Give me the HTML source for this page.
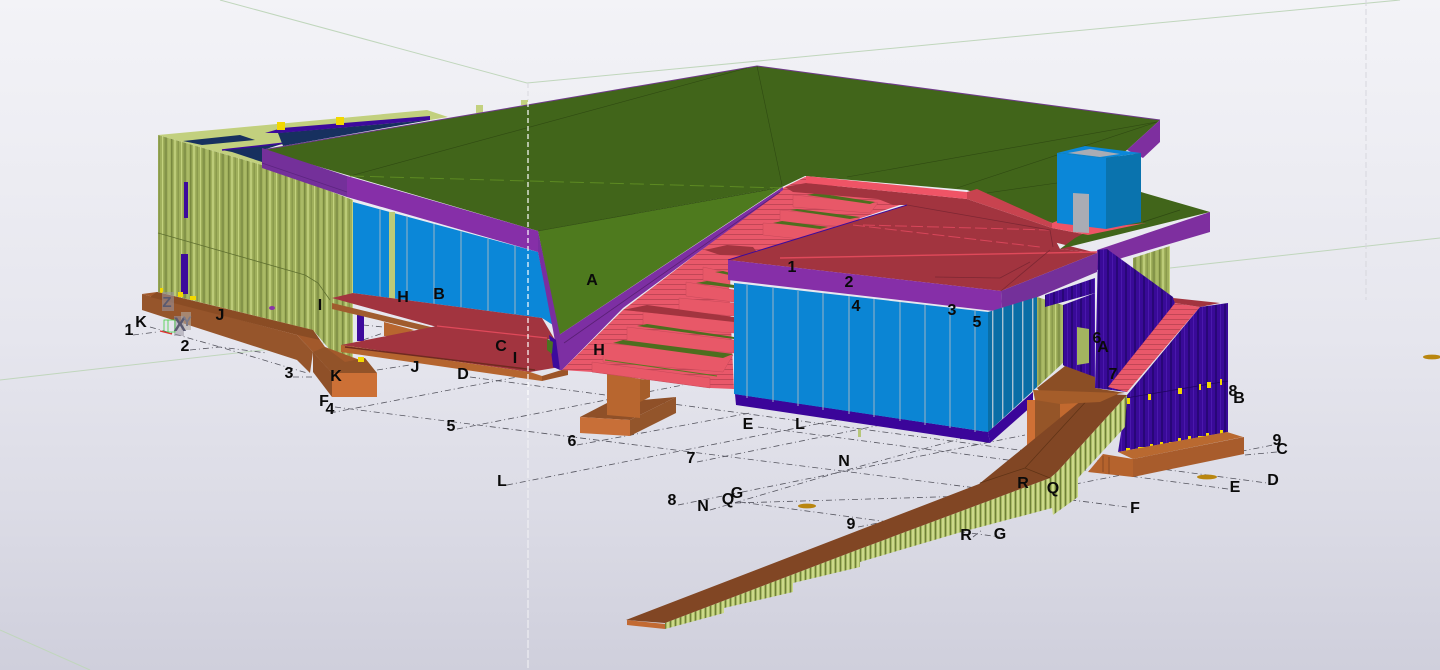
<!DOCTYPE html>
<html>
<head>
<meta charset="utf-8">
<title>3D model view</title>
<style>
html,body{margin:0;padding:0;width:1440px;height:670px;overflow:hidden;background:#dedee8}
svg{display:block}
text{font-family:"Liberation Sans",sans-serif;font-weight:700;font-size:16px;fill:#0a0a0a;text-anchor:middle}
</style>
</head>
<body>
<svg width="1440" height="670" viewBox="0 0 1440 670" xmlns="http://www.w3.org/2000/svg">
<defs>
<linearGradient id="bg" x1="0" y1="0" x2="0" y2="1">
<stop offset="0" stop-color="#f3f3f7"/><stop offset=".5" stop-color="#e6e6ee"/><stop offset=".75" stop-color="#dcdce6"/><stop offset="1" stop-color="#cfcfdc"/>
</linearGradient>
<pattern id="ol" patternUnits="userSpaceOnUse" width="19" height="10">
<rect width="19" height="10" fill="#a0b05c"/><rect width="1.5" height="10" fill="#79893f"/><rect x="3" width="2" height="10" fill="#bccb78"/><rect x="6.5" width="1.5" height="10" fill="#8a9a4c"/><rect x="10" width="1" height="10" fill="#c3d27e"/><rect x="12.5" width="2.5" height="10" fill="#849449"/><rect x="16.5" width="1" height="10" fill="#b4c470"/>
</pattern>
<pattern id="ol2" patternUnits="userSpaceOnUse" width="5" height="10">
<rect width="5" height="10" fill="#a6b863"/><rect width="1" height="10" fill="#6f8038"/><rect x="2" width="2" height="10" fill="#ccd98a"/>
</pattern>
<pattern id="in" patternUnits="userSpaceOnUse" width="9" height="10">
<rect width="9" height="10" fill="#390a98"/><rect width="2" height="10" fill="#280777"/><rect x="5" width="1" height="10" fill="#4a18ad"/>
</pattern>
<pattern id="bl" patternUnits="userSpaceOnUse" width="10" height="10">
<rect width="10" height="10" fill="#0a6ea6"/><rect x="2" width="1.4" height="10" fill="#a9c2d2"/>
</pattern>
<pattern id="st" patternUnits="userSpaceOnUse" width="10" height="5">
<rect width="10" height="5" fill="#e9586a"/><rect y="4" width="10" height="1" fill="#c24656"/>
</pattern>
</defs>

<rect width="1440" height="670" fill="url(#bg)"/>

<!-- guide lines -->
<g fill="none" stroke="#c0d6bc" stroke-width="1">
<path d="M220 0L527 83"/><path d="M527 83L1400 0"/><path d="M0 380L350 340"/><path d="M1170 268L1440 238"/><path d="M0 630L90 670"/>
</g>
<path d="M1366 0V300" stroke="#d6d6dd" stroke-width="1" fill="none" stroke-dasharray="6 3"/>
<path d="M528 83V100" stroke="#d8d8de" stroke-width="1" stroke-dasharray="5 3"/>

<!-- grid -->
<g fill="none" stroke="#55555f" stroke-width=".8" stroke-dasharray="6 3 1 3">
<path d="M133 335L157 332"/><path d="M150 327L220 347L307 373"/><path d="M190 350L220 347L267 353"/><path d="M293 377L312 377"/>
<path d="M377 370L410 365"/><path d="M363 325L383 327M363 340L383 333"/>
<path d="M470 377L1267 483"/><path d="M758 427L1228 489"/><path d="M335 407L1127 507"/><path d="M740 502L1000 537"/>
<path d="M330 413L517 377"/><path d="M457 429L683 385"/><path d="M577 445L750 413"/><path d="M507 485L873 413"/>
<path d="M697 462L1025 396"/><path d="M678 505L1025 435"/><path d="M710 510L843 471L1000 428"/>
<path d="M858 527L1273 445"/><path d="M735 503L970 496"/><path d="M973 537L982 530"/><path d="M1245 455L1277 452"/>
</g>
<ellipse cx="807" cy="506" rx="9" ry="2.4" fill="#b9860f"/>
<ellipse cx="1207" cy="477" rx="10" ry="2.4" fill="#b9860f"/>
<ellipse cx="1432" cy="357" rx="9" ry="2.4" fill="#b9860f"/>
<rect x="858" y="429" width="3" height="8" fill="#b6c67a"/>

<!-- west wing roof -->
<polygon points="158,135 277,124 427,110 448,117 262,148 262,165" fill="#c2d07e"/>
<polygon points="183,141 240,135 255,140 202,145" fill="#17305f"/>
<polygon points="222,150 285,143 263,150 262,162 232,152" fill="#17305f"/>
<path d="M222 150L285 143" stroke="#3d0a9c" stroke-width="1.5"/>
<polygon points="278,133 430,120 300,143 283,146" fill="#17305f"/>
<polygon points="265,133 282,128 430,116 430,120 280,133" fill="#3d0a9c"/>
<rect x="277" y="122" width="8" height="8" fill="#f2d800"/>
<rect x="336" y="117" width="8" height="8" fill="#f2d800"/>
<rect x="476" y="105" width="7" height="8" fill="#c3d17f"/>
<rect x="521" y="100" width="7" height="5" fill="#c3d17f"/>

<!-- west olive wall -->
<polygon points="158,135 262,165 353,200 353,357 340,357 330,350 313,330 158,292" fill="url(#ol)"/>
<path d="M158 233L305 275L318 283L330 300" fill="none" stroke="#5f7030" stroke-width=".8"/>
<rect x="184" y="182" width="4" height="36" fill="#3d0a9c"/>
<rect x="181" y="254" width="7" height="40" fill="#3d0a9c"/>
<ellipse cx="272" cy="308" rx="3" ry="2" fill="#8a35a8"/>
<rect x="160" y="288" width="3" height="6" fill="#f2d800"/><rect x="178" y="292" width="5" height="5" fill="#f2d800"/><rect x="190" y="296" width="6" height="4" fill="#f2d800"/>

<!-- orange beam J + K block -->
<polygon points="142,294 157,292 313,330 325,347 360,360 332,373 313,352 297,335" fill="#a2592b"/>
<polygon points="142,294 142,310 297,360 310,373 313,352 297,335" fill="#96552b"/>
<polygon points="150,297 157,292 313,330 320,340 298,335" fill="#8a4c24"/>
<polygon points="313,352 332,373 332,397 313,372" fill="#8f5028"/>
<polygon points="313,352 325,347 345,362 365,358 377,373 332,373" fill="#925329"/>
<polygon points="332,373 377,373 377,397 332,397" fill="#cc7036"/>
<rect x="358" y="357" width="6" height="5" fill="#f2d800"/>

<!-- column under deck -->
<rect x="357" y="315" width="7" height="26" fill="#3d0a9c"/>
<polygon points="384,322 414,330 398,336 384,336" fill="#b8662f"/>

<!-- middle column footing -->
<polygon points="580,417 607,403 676,397 630,420" fill="#8f5028"/>
<polygon points="580,417 630,420 630,436 580,433" fill="#c86f38"/>
<polygon points="630,420 676,397 676,413 630,436" fill="#93552b"/>
<polygon points="607,373 640,379 640,418 607,415" fill="#b8662f"/>
<polygon points="640,379 650,380 650,397 640,402" fill="#a55d2a"/>

<!-- west glass -->
<polygon points="353,202 538,252 553,325 542,318 353,293" fill="#0b87d8"/>
<path d="M380 209V297M407 216V300M434 224V304M461 231V307M488 239V311M515 246V314" stroke="#9db4c4" stroke-width="1"/>
<rect x="389" y="212" width="6" height="96" fill="#bccb78"/>

<!-- decks -->
<polygon points="332,303 435,328 420,330 332,309" fill="#a05c2e"/>
<polygon points="332,298 353,293 542,318 555,340 437,327" fill="#a2343f"/>
<polygon points="341,345 437,326 547,338 560,367 530,372" fill="#a2343f"/>
<path d="M437 326L547 338" stroke="#e0495a" stroke-width="1.2"/>
<polygon points="341,345 530,372 542,376 542,381 341,352" fill="#b5652f"/>
<polygon points="542,376 568,368 568,375 542,381" fill="#9c5528"/>
<path d="M345 347L535 370" stroke="#6f2a20" stroke-width="1.5"/>

<!-- main green roof -->
<polygon points="262,150 757,66 1160,120 1127,150 1100,170 1060,226 967,190 805,176 782,187 538,231" fill="#41651a"/>
<polygon points="538,231 782,187 559,335" fill="#4e7a1e"/>
<path d="M262 150L757 66L1160 120" fill="none" stroke="#6f3a8a" stroke-width="1"/>
<g stroke="#2f4a12" stroke-width=".6" fill="none">
<path d="M350 176L747 68"/><path d="M757 66L782 185"/><path d="M847 177L1157 122"/><path d="M957 188L1157 122"/><path d="M987 193L1057 183"/><path d="M538 231L778 188"/>
</g>
<path d="M350 176L782 188" stroke="#5d8a22" stroke-width="1" stroke-dasharray="14 6" fill="none"/>

<!-- west fascia -->
<polygon points="262,148 347,176 347,197 262,168" fill="#74309a"/>
<polygon points="347,176 538,231 538,252 347,197" fill="#862fa8"/>
<path d="M262 163L347 192" stroke="#5d2580" stroke-width=".8"/>
<polygon points="538,231 560,335 560,370 553,330 538,252" fill="#7a2ea0"/>
<polygon points="549,335 556,340 560,370 553,367" fill="#3d0a9c"/>
<polygon points="547,339 553,342 552,354 547,350" fill="#4a7420"/>

<!-- stairs -->
<polygon points="562,370 623,310 783,188 805,177 900,205 728,262 734,389 710,388 592,372" fill="url(#st)"/>
<polygon points="559,335 783,187 783,190 623,308 562,370 560,370" fill="#7d2fa3"/>
<path d="M564 343L780 192" stroke="#5a2075" stroke-width=".8"/>
<g fill="#e85868" stroke="#c84a5a" stroke-width=".5">
<polygon points="592,362 710,378 710,388 592,372"/>
<polygon points="603,343 733,355 723,372 603,362"/>
<polygon points="627,327 734,340 734,353 627,343"/>
<polygon points="643,312 734,320 734,333 643,327"/>
<polygon points="679,298 734,303 734,316 679,311"/>
<polygon points="686,282 734,290 734,302 686,296"/>
<polygon points="703,267 730,273 730,285 703,280"/>
<polygon points="763,223 860,228 875,235 810,240 763,235"/>
<polygon points="780,210 860,218 850,227 780,222"/>
<polygon points="793,195 878,203 870,213 793,207"/>
</g>
<path d="M605 360L717 376" stroke="#5a7a20" stroke-width="1"/>
<polygon points="613,343 623,340 733,354 723,358" fill="#4e6e1e"/>
<polygon points="637,326 647,324 734,337 734,339" fill="#4e6e1e"/>
<polygon points="696,283 707,281 734,285 734,288" fill="#4e6e1e"/>
<polygon points="715,272 723,271 734,274 734,276" fill="#4e6e1e"/>
<polygon points="773,223 782,221 828,227 820,229" fill="#4e6e1e"/>
<polygon points="790,210 797,209 860,217 850,219" fill="#4e6e1e"/>
<polygon points="807,195 817,193 875,202 870,204" fill="#4e6e1e"/>
<polygon points="623,310 647,305 734,317 734,322 643,312" fill="#a2343f"/>
<polygon points="705,250 727,245 753,247 760,256 720,255" fill="#a2343f"/>

<!-- upper red roof -->
<polygon points="785,187 806,183 967,199 1052,228 1088,235 1060,249 1097,253 907,205 893,205 878,199 793,192" fill="#a2343f"/>
<polygon points="967,192 977,189 1052,223 1052,228 967,199" fill="#c8434f"/>
<polygon points="806,176 967,192 967,199 806,183" fill="#ef5466"/>

<!-- front red roof -->
<polygon points="728,260 907,205 1050,230 1060,249 1097,253 1001,291" fill="#a2343f"/>
<path d="M728 260L907 205" stroke="#3d0a9c" stroke-width="1"/>
<path d="M780 258L1097 252" stroke="#e0495a" stroke-width="1.4"/>
<path d="M863 225L1050 230M853 225L1040 247" stroke="#d8465a" stroke-width="1" stroke-dasharray="12 4" fill="none"/>
<path d="M1001 291L1050 250M935 277L1000 278L1030 262M907 205L1050 230L1053 247" stroke="#7d2733" stroke-width=".8" fill="none"/>

<!-- right green roof -->
<polygon points="1130,180 1141,192 1210,212 1060,249 1075,238 1100,225" fill="#41651a"/>
<path d="M1143 222L1180 210" stroke="#2f4a12" stroke-width=".7"/>
<polygon points="1097,250 1210,212 1210,232 1122,258 1097,270" fill="#7e2f9f"/>
<polygon points="1127,150 1160,120 1160,142 1143,158" fill="#7e2f9f"/>

<!-- cube -->
<polygon points="1052,223 1057,221 1106,227 1146,223 1088,235 1073,232 1052,228" fill="#ef5466"/>
<polygon points="1057,153 1085,146 1141,153 1106,158" fill="#0b87d8"/>
<polygon points="1068,153 1090,149 1120,154 1100,157" fill="#a9acb4"/>
<polygon points="1057,153 1106,158 1106,229 1057,223" fill="#0b87d8"/>
<polygon points="1106,158 1141,153 1141,222 1106,229" fill="#0a73ae"/>
<polygon points="1073,193 1089,194 1089,233 1073,232" fill="#a9acb4"/>

<!-- front fascia -->
<polygon points="728,260 1001,291 1002,312 728,280" fill="#862fa8"/>
<polygon points="1001,291 1097,253 1097,272 1002,312" fill="#74309a"/>

<!-- behind east -->
<polygon points="1133,258 1170,246 1170,296 1133,270" fill="url(#ol)"/>
<polygon points="1037,297 1063,305 1063,363 1037,387" fill="url(#ol)"/>
<polygon points="1063,305 1095,293 1095,388 1063,365" fill="url(#in)"/>
<polygon points="1045,295 1095,278 1095,293 1045,307" fill="url(#in)"/>
<polygon points="1077,327 1089,329 1089,363 1077,365" fill="#a3b560"/>
<polygon points="1098,250 1107,249 1173,297 1175,303 1127,392 1095,388" fill="url(#in)"/>

<!-- front glass -->
<polygon points="735,394 988,432 990,443 736,405" fill="#3b059a"/>
<polygon points="734,283 988,312 988,432 734,394" fill="#0b85d4"/>
<path d="M747 285V398M773 288V402M798 291V406M823 293V410M849 296V414M874 299V417M900 302V421M925 305V425M950 308V428M975 311V432" stroke="#9db4c4" stroke-width="1"/>
<polygon points="988,312 1037,297 1037,387 988,432" fill="url(#bl)"/>
<polygon points="988,432 1033,392 1033,405 990,443" fill="#3b059a"/>

<!-- east stair + walls -->
<polygon points="1175,303 1200,307 1127,392 1108,387" fill="url(#st)"/>
<polygon points="1173,298 1220,303 1200,307 1175,303" fill="#a2343f"/>
<polygon points="1200,307 1228,303 1228,432 1118,452 1127,395" fill="url(#in)"/>
<path d="M1126 398L1228 381" stroke="#200560" stroke-width=".8"/>
<g fill="#f2d800">
<rect x="1127" y="398" width="3" height="6"/><rect x="1148" y="394" width="3" height="6"/><rect x="1178" y="388" width="4" height="6"/><rect x="1199" y="384" width="2" height="6"/><rect x="1207" y="382" width="4" height="6"/><rect x="1220" y="379" width="2" height="6"/>
<rect x="1126" y="448" width="4" height="6"/><rect x="1138" y="447" width="14" height="3"/><rect x="1150" y="444" width="3" height="6"/><rect x="1160" y="442" width="3" height="6"/><rect x="1169" y="442" width="3" height="4"/><rect x="1178" y="438" width="3" height="6"/><rect x="1188" y="436" width="3" height="6"/><rect x="1198" y="436" width="12" height="3"/><rect x="1206" y="433" width="3" height="6"/><rect x="1220" y="430" width="3" height="6"/>
</g>

<!-- east footing -->
<polygon points="1118,452 1227,432 1243,437 1133,459" fill="#b96930"/>
<polygon points="1133,459 1244,437 1244,454 1133,477" fill="#a85c2c"/>
<polygon points="1088,472 1103,454 1133,459 1133,477" fill="#b5632d"/>
<path d="M1103 456V472M1109 457V474" stroke="#7f4522" stroke-width=".8"/>

<!-- under ramp -->
<polygon points="1027,450 1027,400 1035,400 1035,450" fill="#cf7035"/>
<polygon points="1035,400 1060,400 1060,427 1035,450" fill="#955528"/>
<polygon points="1060,400 1082,400 1060,427" fill="#c2692f"/>

<!-- ramp -->
<polygon points="665,623 857,550 1050,478 1057,472 1127,395 1125,427 1078,478 1078,497 1053,515 1052,508 958,533 860,562 860,567 793,583 793,592 724,608 724,613 665,629" fill="url(#ol2)"/>
<polygon points="626,620 979,484 1082,400 1092,393 1127,395 1057,472 1050,478 857,550 665,623" fill="#814624"/>
<polygon points="1037,388 1065,366 1095,377 1095,388 1125,393 1092,396 1040,392" fill="#8b4e25"/>
<polygon points="627,620 665,624 665,629 627,625" fill="#c26a33"/>
<path d="M980 483L1025 468L1050 478M1025 468L1057 433L1092 395" stroke="#5f3316" stroke-width=".7" fill="none"/>
<polygon points="1033,390 1120,393 1100,402 1060,404 1035,400" fill="#a55d2a"/>

<!-- axis gizmo -->
<rect x="162" y="292" width="12" height="19" fill="#9a97a4" fill-opacity=".55"/>
<rect x="174" y="316" width="10" height="20" fill="#9a97a4" fill-opacity=".55"/>
<rect x="181" y="312" width="10" height="18" fill="#b0a8a0" fill-opacity=".6"/>
<path d="M164 320H175V332H164ZM168 320V332" fill="none" stroke="#40d040" stroke-width=".8"/>
<path d="M160 331L172 334" stroke="#e03030" stroke-width="1.4"/>
<text x="167" y="307" style="fill:#5a5a70;font-size:15px">Z</text>
<text x="180" y="331" style="fill:#5a5a70;font-size:19px">X</text>
<text x="187" y="326" style="fill:#7a7a88;font-size:14px">Y</text>

<!-- white dashed vertical -->
<path d="M528 102V400" stroke="#ffffff" stroke-width="1.2" stroke-dasharray="5 3" fill="none"/>
<path d="M528 400V670" stroke="#f4f4f6" stroke-width="1" stroke-dasharray="8 2" fill="none"/>

<!-- labels -->
<text x="592" y="285">A</text><text x="439" y="299">B</text><text x="501" y="351">C</text><text x="463" y="379">D</text>
<text x="748" y="429">E</text><text x="324" y="406">F</text><text x="403" y="302">H</text><text x="599" y="355">H</text>
<text x="320" y="310">I</text><text x="515" y="363">I</text><text x="220" y="320">J</text><text x="415" y="372">J</text>
<text x="141" y="327">K</text><text x="336" y="381">K</text><text x="800" y="429">L</text><text x="502" y="486">L</text>
<text x="129" y="335">1</text><text x="185" y="351">2</text><text x="289" y="378">3</text><text x="330" y="414">4</text>
<text x="451" y="431">5</text><text x="572" y="446">6</text><text x="691" y="463">7</text><text x="672" y="505">8</text><text x="851" y="529">9</text>
<text x="792" y="272">1</text><text x="849" y="287">2</text><text x="952" y="315">3</text><text x="856" y="311">4</text><text x="977" y="327">5</text>
<text x="1097" y="343">6</text><text x="1103" y="352">A</text><text x="1113" y="379">7</text><text x="1233" y="396">8</text><text x="1239" y="403">B</text>
<text x="1277" y="445">9</text><text x="1282" y="454">C</text><text x="1273" y="485">D</text><text x="1235" y="492">E</text><text x="1135" y="513">F</text>
<text x="844" y="466">N</text><text x="703" y="511">N</text><text x="728" y="504">Q</text><text x="737" y="498">G</text>
<text x="1023" y="488">R</text><text x="1053" y="493">Q</text><text x="966" y="540">R</text><text x="1000" y="539">G</text>
</svg>
</body>
</html>
